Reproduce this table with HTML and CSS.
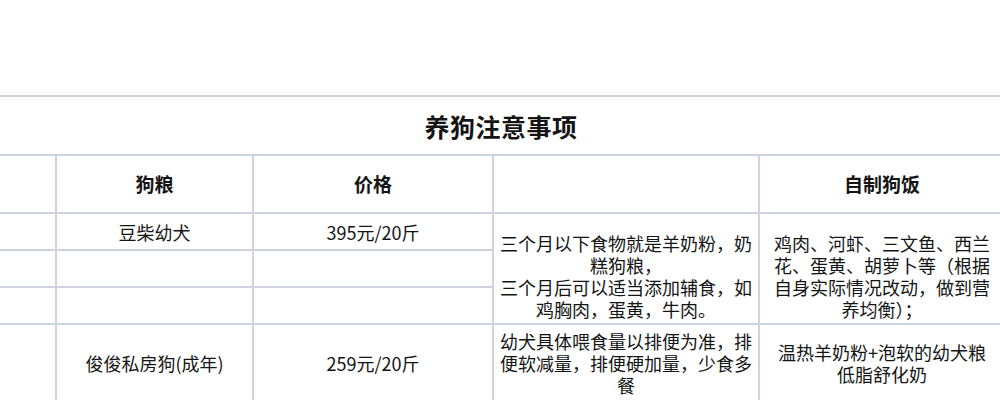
FILE: index.html
```html
<!DOCTYPE html>
<html lang="zh-CN">
<head>
<meta charset="utf-8">
<title>养狗注意事项</title>
<link rel="stylesheet" href="styles.css">
</head>
<body>
<table class="care">
  <colgroup>
    <col class="c0"><col class="c1"><col class="c2"><col class="c3"><col class="c4">
  </colgroup>
  <tr class="r-title">
    <th colspan="5" class="title">养狗注意事项</th>
  </tr>
  <tr class="r-head">
    <th></th>
    <th>狗粮</th>
    <th>价格</th>
    <th></th>
    <th>自制狗饭</th>
  </tr>
  <tr class="r-small">
    <td></td>
    <td>豆柴幼犬</td>
    <td>395元/20斤</td>
    <td rowspan="3" class="span-cell multi">三个月以下食物就是羊奶粉，奶糕狗粮，
三个月后可以适当添加辅食，如鸡胸肉，蛋黄，牛肉。</td>
    <td rowspan="3" class="span-cell last">鸡肉、河虾、三文鱼、西兰花、蛋黄、胡萝卜等（根据自身实际情况改动，做到营养均衡）；</td>
  </tr>
  <tr class="r-small">
    <td></td>
    <td></td>
    <td></td>
  </tr>
  <tr class="r-small">
    <td></td>
    <td></td>
    <td></td>
  </tr>
  <tr class="r-big">
    <td></td>
    <td>俊俊私房狗(成年)</td>
    <td>259元/20斤</td>
    <td>幼犬具体喂食量以排便为准，排便软减量，排便硬加量，少食多餐</td>
    <td class="last multi">温热羊奶粉+泡软的幼犬粮
低脂舒化奶</td>
  </tr>
</table>
</body>
</html>
```

FILE: styles.css
```css
html, body {
  margin: 0;
  padding: 0;
  background: #ffffff;
  overflow: hidden;
}

body {
  font-family: "Noto Sans CJK SC", "Liberation Sans", sans-serif;
  color: #141414;
}

.care {
  border-collapse: collapse;
  table-layout: fixed;
  width: 1008px;
  margin: 95px 0 0 -4px;
}

.c0 { width: 59px; }
.c1 { width: 197px; }
.c2 { width: 240px; }
.c3 { width: 266px; }
.c4 { width: 246px; }

.care th,
.care td {
  border: 2px solid #cfd3de;
  padding: 0 5px;
  text-align: center;
  vertical-align: middle;
  font-size: 18px;
  line-height: 22px;
  font-weight: 400;
}

.care th {
  font-weight: 700;
  font-size: 19px;
}

.care .title {
  font-size: 25px;
  font-weight: 700;
  letter-spacing: 0.5px;
}

.r-title { height: 59px; }
.r-head { height: 58px; }
.r-small { height: 37px; }
.r-big { height: 78px; }

.care .multi {
  white-space: pre-line;
}

.care .span-cell {
  padding-top: 14px;
  padding-bottom: 0;
}

.care .last {
  padding-left: 8px;
  padding-right: 8px;
}
```
